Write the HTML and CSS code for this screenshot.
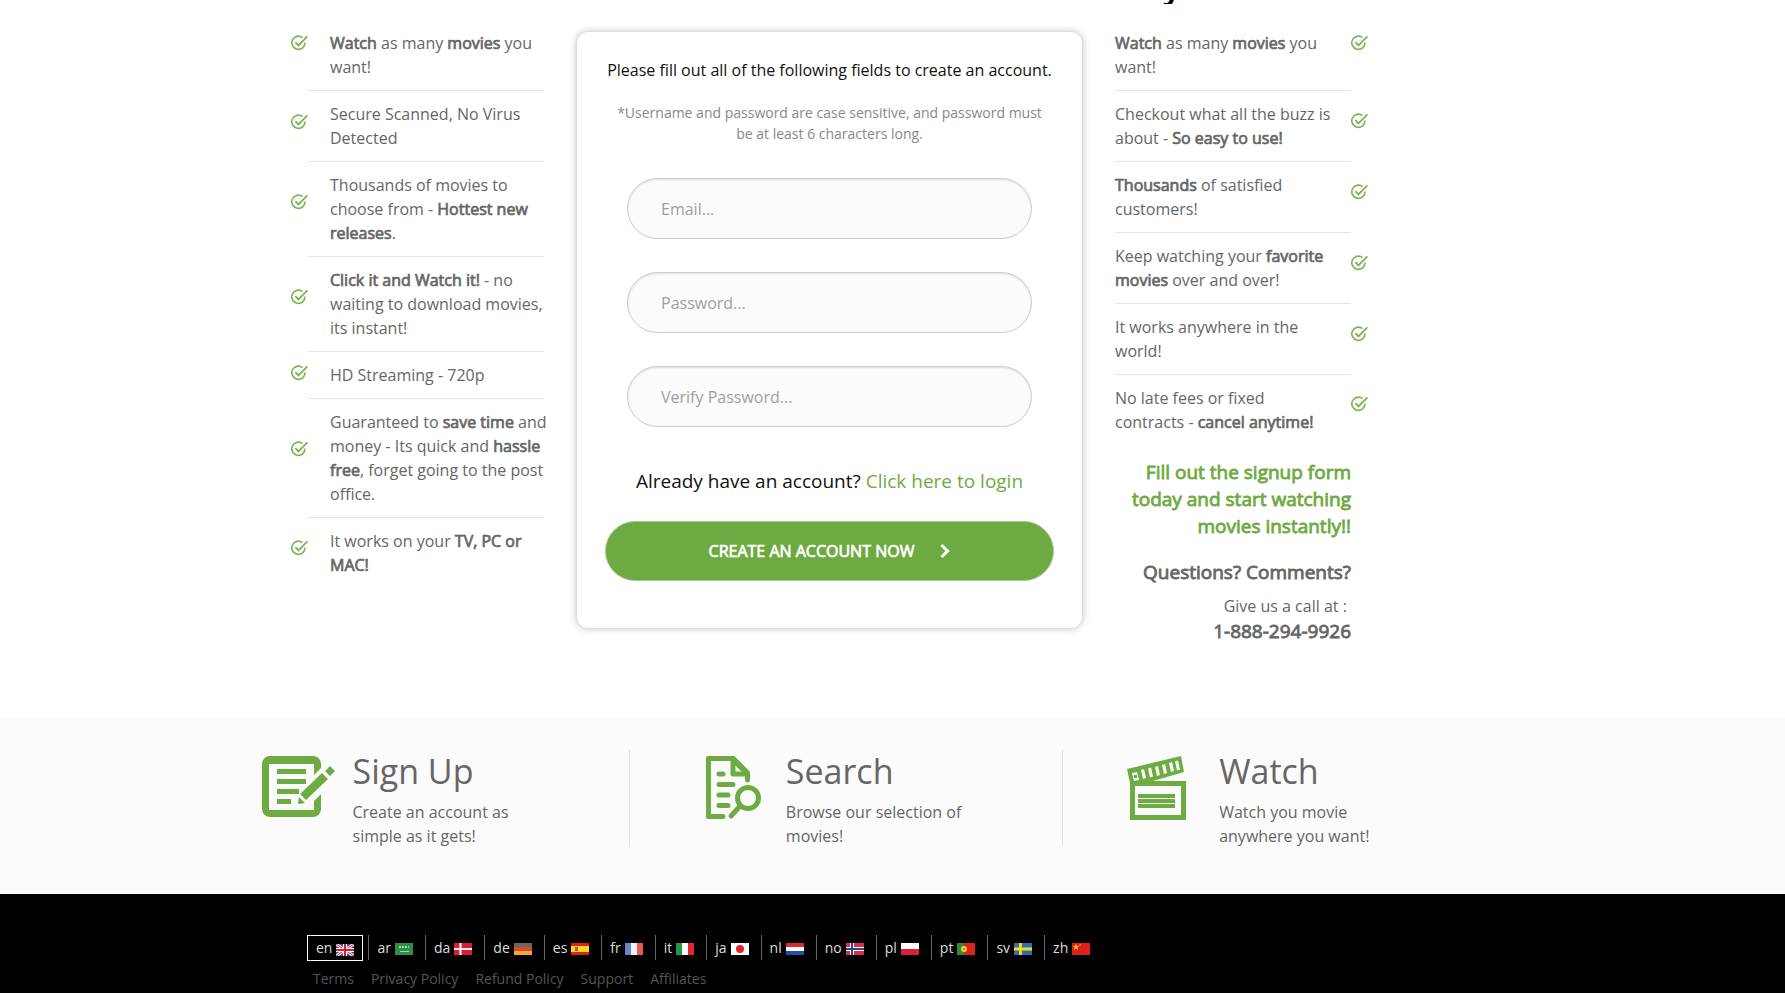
FILE: index.html
```html
<!DOCTYPE html>
<html lang="en">
<head>
<meta charset="utf-8">
<title>Create an account</title>
<link rel="stylesheet" href="styles.css">
</head>
<body>
<svg class="defs" aria-hidden="true">
  <symbol id="tick" viewBox="0 0 17 17">
    <path d="M11.5 2.6A6.6 6.6 0 1 0 14 7.6" fill="none" stroke="currentColor" stroke-width="1.6"/>
    <path d="M4.4 7.2l3 3.2L16.4 1.4" fill="none" stroke="currentColor" stroke-width="1.8"/>
  </symbol>
</svg>

<div class="page">
  <header class="top"><div class="wrap columns"><h2 class="top-title">Why</h2></div></header>

  <main class="signup">
    <div class="wrap columns">
      <ul class="perks perks-left">
        <li><span class="tick"><svg><use href="#tick"/></svg></span><p><b>Watch</b> as many <b>movies</b> you want!</p></li>
        <li><span class="tick"><svg><use href="#tick"/></svg></span><p>Secure Scanned, No Virus Detected</p></li>
        <li><span class="tick"><svg><use href="#tick"/></svg></span><p>Thousands of movies to choose from - <b>Hottest new releases</b>.</p></li>
        <li><span class="tick"><svg><use href="#tick"/></svg></span><p><b>Click it and Watch it!</b> - no waiting to download movies, its instant!</p></li>
        <li><span class="tick"><svg><use href="#tick"/></svg></span><p>HD Streaming - 720p</p></li>
        <li><span class="tick"><svg><use href="#tick"/></svg></span><p>Guaranteed to <b>save time</b> and money - Its quick and <b>hassle free</b>, forget going to the post office.</p></li>
        <li><span class="tick"><svg><use href="#tick"/></svg></span><p>It works on your <b>TV, PC or MAC!</b></p></li>
      </ul>

      <form class="card">
        <p class="card-lead">Please fill out all of the following fields to create an account.</p>
        <p class="card-note">*Username and password are case sensitive, and password must be at least 6 characters long.</p>
        <div class="fields">
          <input type="email" placeholder="Email..." aria-label="Email">
          <input type="password" placeholder="Password..." aria-label="Password">
          <input type="password" placeholder="Verify Password..." aria-label="Verify Password">
        </div>
        <p class="card-login">Already have an account? <a href="#">Click here to login</a></p>
        <button type="submit" class="submit">CREATE AN ACCOUNT NOW
          <svg class="chevron" viewBox="0 0 10 16"><path d="M1.5 2l6 6-6 6" fill="none" stroke="currentColor" stroke-width="3"/></svg>
        </button>
      </form>

      <div class="side">
        <ul class="perks perks-right">
          <li><p><b>Watch</b> as many <b>movies</b> you want!</p><span class="tick"><svg><use href="#tick"/></svg></span></li>
          <li><p>Checkout what all the buzz is about - <b>So easy to use!</b></p><span class="tick"><svg><use href="#tick"/></svg></span></li>
          <li><p><b>Thousands</b> of satisfied customers!</p><span class="tick"><svg><use href="#tick"/></svg></span></li>
          <li><p>Keep watching your <b>favorite movies</b> over and over!</p><span class="tick"><svg><use href="#tick"/></svg></span></li>
          <li><p>It works anywhere in the world!</p><span class="tick"><svg><use href="#tick"/></svg></span></li>
          <li><p>No late fees or fixed contracts - <b>cancel anytime!</b></p><span class="tick"><svg><use href="#tick"/></svg></span></li>
        </ul>
        <div class="contact">
          <p class="cta">Fill out the signup form today and start watching movies instantly!!</p>
          <p class="questions">Questions? Comments?</p>
          <p class="call">Give us a call at :&nbsp;</p>
          <p class="phone">1-888-294-9926</p>
        </div>
      </div>
    </div>
  </main>

  <section class="steps">
    <div class="steps-grid">
      <article class="step">
        <svg class="step-icon" viewBox="0 0 92 64">
          <path d="M9 0H52a8 8 0 0 1 8 8V12L53 19V8H8V54H53V45L60 38V53a8 8 0 0 1-8 8H9a8 8 0 0 1-8-8V8a8 8 0 0 1 8-8z" fill="currentColor"/>
          <path d="M16 13h29v5H16zM16 23h29v5H16zM16 33h22v5H16zM16 43h14v5H16z" fill="currentColor"/>
          <path d="M61 17l6 6-22 21-6-6zM38 41l6 6-6 1-1-1z M64 15l5-5 5 5-5 5z" fill="currentColor"/>
        </svg>
        <div><h3>Sign Up</h3><p>Create an account as simple as it gets!</p></div>
      </article>
      <article class="step">
        <svg class="step-icon" viewBox="0 0 92 64" fill="none" stroke="currentColor" stroke-width="5" stroke-linecap="round" stroke-linejoin="round">
          <path d="M29 60.500H14.500V2.500H39L53.500 17V24"/>
          <path d="M39 3V18H53"/>
          <path d="M39 3l14 14" stroke-width="6"/>
          <path d="M25 18h4M25 28.500h14M25 39h9M25 49.500h9"/>
          <circle cx="54" cy="42" r="10.500"/>
          <path d="M46 50L37 60"/>
        </svg>
        <div><h3>Search</h3><p>Browse our selection of movies!</p></div>
      </article>
      <article class="step">
        <svg class="step-icon" viewBox="0 0 92 64">
          <path d="M0 13L54 0l3 16L26 25H59V64H3V27z" fill="currentColor"/>
          <path class="cut" d="M8 30H54V59H8z"/>
          <path class="cut" d="M5 17l5-1 2 8-5 1zM14 14l3-1 2 9-3 1zM21 12.500l3-1 2 9-3 1zM28 11l3-1 2 9-3 1zM35 9l3-1 2 9-3 1zM42 7l3-1 2 9-3 1zM48 5.500l3-1 2 9-3 1z"/>
          <path d="M11 38h37v4H11zM11 43h37v4H11zM11 48h37v4H11zM7 19h3v3H7z" fill="currentColor"/>
        </svg>
        <div><h3>Watch</h3><p>Watch you movie anywhere you want!</p></div>
      </article>
    </div>
  </section>

  <footer class="footer">
    <div class="wrap footer-in">
      <nav class="langs" aria-label="Language">
        <a class="active" href="#">en <svg viewBox="0 0 18 12"><path fill="#3a4a9a" d="M0 0h18v12H0z"/><path stroke="#eee" stroke-width="3" d="M0 0l18 12M18 0L0 12"/><path stroke="#d33" stroke-width="1" d="M0 0l18 12M18 0L0 12"/><path stroke="#fff" stroke-width="4" d="M9 0v12M0 6h18"/><path stroke="#d8202a" stroke-width="2" d="M9 0v12M0 6h18"/></svg></a>
        <a href="#">ar <svg viewBox="0 0 18 12"><path fill="#2f8f47" d="M0 0h18v12H0z"/><path stroke="#a5d3ae" stroke-width="2" stroke-dasharray="2 1" d="M4 4h10"/><path stroke="#a5d3ae" d="M5 8.500h9"/></svg></a>
        <a href="#">da <svg viewBox="0 0 18 12"><path fill="#e01b2e" d="M0 0h18v12H0z"/><path stroke="#fff" stroke-width="2" d="M6.500 0v12M0 6h18"/></svg></a>
        <a href="#">de <svg viewBox="0 0 18 12"><path fill="#666" d="M0 0h18v4H0z"/><path fill="#e2452c" d="M0 4h18v4H0z"/><path fill="#f3a63a" d="M0 8h18v4H0z"/></svg></a>
        <a href="#">es <svg viewBox="0 0 18 12"><path fill="#e02020" d="M0 0h18v12H0z"/><path fill="#fbd91e" d="M0 3h18v6H0z"/><path fill="#b5622a" d="M4 4h3v4H4z"/></svg></a>
        <a href="#">fr <svg viewBox="0 0 18 12"><path fill="#6a83cc" d="M0 0h6v12H0z"/><path fill="#f2f2f5" d="M6 0h6v12H6z"/><path fill="#e9565c" d="M12 0h6v12h-6z"/></svg></a>
        <a href="#">it <svg viewBox="0 0 18 12"><path fill="#1f9a45" d="M0 0h6v12H0z"/><path fill="#fff" d="M6 0h6v12H6z"/><path fill="#e0262e" d="M12 0h6v12h-6z"/></svg></a>
        <a href="#">ja <svg viewBox="0 0 18 12"><path fill="#fff" d="M0 0h18v12H0z"/><circle cx="9" cy="6" r="4" fill="#e0202a"/></svg></a>
        <a href="#">nl <svg viewBox="0 0 18 12"><path fill="#dd2636" d="M0 0h18v4H0z"/><path fill="#fff" d="M0 4h18v4H0z"/><path fill="#1f4fa8" d="M0 8h18v4H0z"/></svg></a>
        <a href="#">no <svg viewBox="0 0 18 12"><path fill="#dd3038" d="M0 0h18v12H0z"/><path stroke="#fff" stroke-width="4" d="M6 0v12M0 6h18"/><path stroke="#2b4590" stroke-width="2" d="M6 0v12M0 6h18"/></svg></a>
        <a href="#">pl <svg viewBox="0 0 18 12"><path fill="#fff" d="M0 0h18v6H0z"/><path fill="#dd1f35" d="M0 6h18v6H0z"/></svg></a>
        <a href="#">pt <svg viewBox="0 0 18 12"><path fill="#2f8a3c" d="M0 0h7v12H0z"/><path fill="#dd2222" d="M7 0h11v12H7z"/><circle cx="7" cy="6" r="3" fill="#f0d030"/><circle cx="7" cy="6" r="1" fill="#e05030"/></svg></a>
        <a href="#">sv <svg viewBox="0 0 18 12"><path fill="#2a6fb0" d="M0 0h18v12H0z"/><path stroke="#f6d823" stroke-width="3" d="M6.500 0v12M0 6h18"/></svg></a>
        <a href="#">zh <svg viewBox="0 0 18 12"><path fill="#dd2018" d="M0 0h18v12H0z"/><path fill="#f7c22a" d="M4 1l1 2h2L5.500 4.500 6 7 4 5.500 2 7l.5-2.500L1 3h2z"/><circle cx="8" cy="2" r=".8" fill="#f7c22a"/></svg></a>
      </nav>
      <nav class="links" aria-label="Footer">
        <a href="#">Terms</a><a href="#">Privacy Policy</a><a href="#">Refund Policy</a><a href="#">Support</a><a href="#">Affiliates</a>
      </nav>
    </div>
  </footer>
</div>
</body>
</html>
```
FILE: styles.css
```css
* { box-sizing: border-box; }
body, h2, h3, p, ul { margin: 0; padding: 0; }
body {
  background: #fff;
  color: #666;
  font-family: "Open Sans", "Noto Sans", sans-serif;
  font-size: 16px;
  line-height: 24px;
}
a { text-decoration: none; }
.defs { display: none; }
.page { min-height: 100vh; display: flex; flex-direction: column; }

/* page column, set left of centre */
.wrap { max-width: 1077px; margin: 0 auto; }
.top, .signup, .footer { padding-right: 126px; }
.columns {
  display: grid;
  grid-template-columns: 253px minmax(0, 1fr) 253px;
  column-gap: 32px;
}

.top { height: 4px; overflow: hidden; }
.top .columns { height: 100%; align-content: end; }
.top-title {
  grid-column: 3;
  color: #000;
  font-size: 32px;
  line-height: 36px;
}

.signup { padding-top: 16px; padding-bottom: 72px; }

/* regular face thickened, keeping its widths */
b, .cta, .questions, .phone, .submit, .top-title { font-weight: 400; -webkit-text-stroke: .045em currentColor; }

.perks { list-style: none; }
.perks li { display: flex; }
.perks p { flex: 1; padding: 11px 0 12px; }
.perks-left p {
  margin-right: -4px;
  padding-left: 22px;
  background: linear-gradient(#e4e4e4, #e4e4e4) left bottom / calc(100% - 4px) 1px no-repeat;
}
.perks-right p {
  padding-right: 20px;
  background: linear-gradient(#e4e4e4, #e4e4e4) left bottom / 100% 1px no-repeat;
}
.perks li:last-child p { padding-bottom: 11px; background: none; }
.tick { width: 17px; flex: none; display: flex; flex-direction: column; color: #79b451; }
.tick svg { width: 17px; height: 17px; flex: none; }
.perks-left .tick { padding-top: 2px; }
.tick::before { content: ""; flex: 2; }
.tick::after { content: ""; flex: 3; }
.perks li:first-child .tick { padding-top: 15px; }
.perks li:first-child .tick::before { flex: none; }

.card {
  margin-top: 11px;
  padding: 26px 28px 47px;
  align-self: start;
  border: 1px solid #ddd;
  border-radius: 12px;
  box-shadow: 0 0 7px rgba(0, 0, 0, .22);
  text-align: center;
  background: #fff;
}
.card-lead { color: #111; }
.card-note { margin-top: 20px; padding: 0 8px; font-size: 14px; line-height: 21px; color: #888; }
.fields { margin: 34px 22px 0; display: grid; gap: 33px; }
.fields input {
  width: 100%;
  height: 61px;
  padding: 0 33px;
  border: 1px solid #ccc;
  border-radius: 31px;
  background: #fbfbfb;
  box-shadow: inset 0 1px 2px rgba(0, 0, 0, .12);
  font: inherit;
  color: #444;
}
.fields input::placeholder { color: #a0a0a0; opacity: 1; }
.card-login { margin-top: 41px; font-size: 19px; line-height: 26px; color: #111; }
.card-login a { color: #6eab42; }
.submit {
  width: 100%;
  height: 60px;
  margin-top: 27px;
  border: 1px solid #a9c894;
  border-radius: 30px;
  background: #6eaa42;
  color: #fff;
  font-family: inherit;
  font-size: 16px;
  display: flex;
  align-items: center;
  justify-content: center;
  gap: 26px;
}
.chevron { width: 10px; height: 16px; }

.contact { padding-right: 17px; text-align: right; }
.cta { margin-top: 14px; padding-left: 10px; color: #6eab42; font-size: 19px; line-height: 27px; }
.questions { margin-top: 19px; font-size: 19px; line-height: 26px; }
.call { margin-top: 9px; }
.phone { font-size: 19px; line-height: 27px; }

.steps { background: #fbfbfb; padding: 33px 92px 48px 0; }
.steps-grid { max-width: 1300px; margin: 0 auto; display: grid; grid-template-columns: repeat(3, minmax(0, 1fr)); }
.step { height: 96px; padding: 0 60px 0 64px; display: flex; border-right: 1px solid #e2e2e2; }
.step:last-child { border-right: 0; }
.step-icon { width: 92px; height: 64px; margin-top: 6px; flex: none; color: #6eab42; }
.step-icon .cut { fill: #fbfbfb; }
.step h3 { font-size: 34px; line-height: 42px; font-weight: 400; }
.step p { margin-top: 8px; max-width: 180px; }

.footer { flex: 1; background: #000; padding-top: 41px; }
.footer-in { padding-left: 16px; }
.langs { display: flex; font-size: 14px; line-height: 24px; }
.langs a { display: flex; align-items: center; gap: 4px; height: 25px; padding: 0 12px 0 8px; border-left: 1px solid #666; color: #ddd; }
.langs a.active { height: 26px; margin-right: 5px; padding: 0 8px; border: 1px solid #fff; }
.langs svg { width: 18px; height: 12px; margin-top: 3px; }
.links { display: flex; gap: 17px; margin-top: 6px; padding: 0 6px; font-size: 14px; line-height: 24px; }
.links a { color: #555; }
```
